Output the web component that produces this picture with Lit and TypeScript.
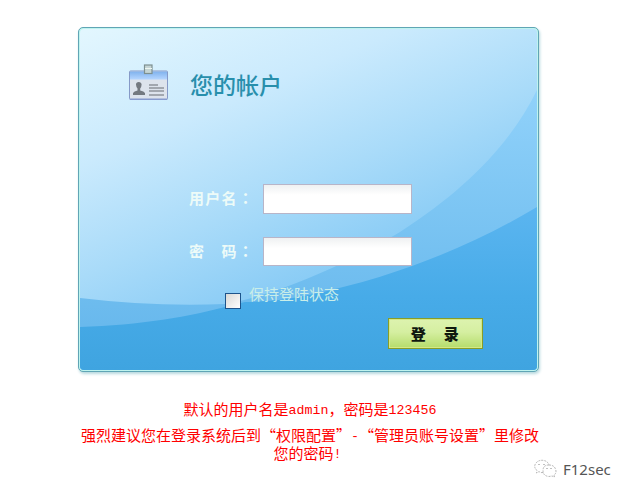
import { LitElement, html, css, svg } from 'lit';
import { customElement, property } from 'lit/decorators.js';

@customElement('card-backdrop')
class CardBackdrop extends LitElement {
  static styles = css`
    :host { position: absolute; inset: 0; overflow: hidden; border-radius: 4px; }
    svg { display: block; width: 100%; height: 100%; }
  `;
  render() {
    return html`<svg viewBox="80 29 457 341" preserveAspectRatio="none">
      ${svg`
      <defs>
        <linearGradient id="sky" gradientUnits="userSpaceOnUse" x1="160" y1="0" x2="285" y2="295">
          <stop offset="0" stop-color="#e2f6fe"/><stop offset=".38" stop-color="#caeafd"/>
          <stop offset=".7" stop-color="#a9dbf9"/><stop offset="1" stop-color="#88cbf5"/>
        </linearGradient>
        <linearGradient id="band" gradientUnits="userSpaceOnUse" x1="0" y1="95" x2="0" y2="325">
          <stop offset="0" stop-color="#90d1fa"/><stop offset=".5" stop-color="#7cc5f3"/><stop offset="1" stop-color="#69b9ed"/>
        </linearGradient>
        <linearGradient id="sea" gradientUnits="userSpaceOnUse" x1="0" y1="208" x2="0" y2="370">
          <stop offset="0" stop-color="#5bb5f0"/><stop offset=".55" stop-color="#47abe8"/><stop offset="1" stop-color="#3fa4e0"/>
        </linearGradient>
      </defs>
      <rect x="80" y="29" width="457" height="341" fill="url(#sky)"/>
      <path d="M80 298Q155 307 225 304C275 295 340 268 400 232C465 190 510 145 537 90V370H80Z" fill="url(#band)"/>
      <path d="M80 327C140 325 190 317 232 305L245 302Q275 302 309 295C400 276 475 244 537 207V370H80Z" fill="url(#sea)"/>`}
    </svg>`;
  }
}

@customElement('badge-icon')
class BadgeIcon extends LitElement {
  static styles = css`:host { display: block; width: 42px; height: 38px; } svg { display: block; }`;
  render() {
    return html`<svg width="42" height="38" viewBox="0 0 42 38">
      <defs>
        <linearGradient id="head" x1="0" y1="0" x2="0" y2="1"><stop stop-color="#80b2ed"/><stop offset="1" stop-color="#b5d6ff"/></linearGradient>
      </defs>
      <rect x="1.5" y="7" width="38" height="28.5" rx="1" fill="#dde3ec" stroke="#8599c7"/>
      <rect x="2" y="7.5" width="37" height="8" fill="url(#head)"/>
      <path d="M2 35.3H39" stroke="#879bce" stroke-width="1.5"/>
      <rect x="16.5" y="1" width="7.5" height="8.5" fill="#c5d5d5" stroke="#7e9090" stroke-width="1.2"/>
      <path d="M17 4.5H24" stroke="#edf6f0"/>
      <path d="M5 31V29Q6 27 9.5 26.5V24.5Q8 22.5 8 20.5Q8 18 10.7 18T13.6 20.5Q13.6 22.5 12.2 24.5V26.5Q16 27 17 29V31Z" fill="#747980"/>
      <path d="M21 21H30M21 24H36M21 27H36M21 31H36" stroke="#8f949a" stroke-width="1.3"/>
    </svg>`;
  }
}

@customElement('login-field')
class LoginField extends LitElement {
  @property() label = '';
  @property() type = 'text';
  static styles = css`
    :host { display: flex; align-items: flex-start; height: 30px; }
    .label { width: 74px; font: 700 15px/28px "Noto Sans CJK SC", sans-serif; color: #edfbf8; white-space: pre; letter-spacing: 1.3px; }
    .colon { font-family: "Noto Sans CJK TC", sans-serif; }
    .box { box-sizing: border-box; width: 149px; height: 100%; padding: 4px; margin: 0; border: 1px solid #b8b5c8; border-radius: 0; background: linear-gradient(#eff1f2, #fff 10px); outline: none; }
  `;
  render() {
    return html`<span class="label">${this.label}<span class="colon" lang="zh-TW">：</span></span><input class="box" type=${this.type} aria-label=${this.label}>`;
  }
}

@customElement('app-root')
class AppRoot extends LitElement {
  static styles = css`
    :host { display: flex; flex-direction: column; box-sizing: border-box; position: relative; width: 630px; height: 495px; padding-top: 27px; overflow: hidden; background: #fff; font-family: "Noto Sans CJK SC", sans-serif; }
    .card { box-sizing: border-box; position: relative; flex: none; width: 461px; height: 345px; margin-left: 78px; border: 1px solid #60a5b5; border-radius: 5px; background: #bef4ef; padding: 1px; box-shadow: 1px 2px 3px #b8d9df; }
    .rim { position: absolute; inset: 1px; }
    .content { position: relative; display: flex; flex-direction: column; padding: 35px 0 0 48px; }
    .head { display: flex; height: 42px; }
    .title { margin: 0 0 0 20px; font-size: 23px; line-height: 40px; font-weight: 500; color: #288fac; }
    .fields { display: flex; flex-direction: column; gap: 23px; margin: 78px 0 0 61px; }
    .short { height: 29px; }
    .keep { display: flex; margin: 19px 0 0 97px; height: 24px; }
    .check { appearance: none; box-sizing: border-box; width: 16px; height: 16px; margin: 8px 8px 0 0; border: 1px solid #1d548b; border-radius: 0; background: linear-gradient(135deg, #d9d9d6, #fff); }
    .keep-text { font-size: 15px; line-height: 18px; color: #c9eee9; }
    .login { box-sizing: border-box; width: 95px; height: 31px; margin: 9px 0 0 260px; padding: 0; border: 1px solid #879d29; border-radius: 0; background: linear-gradient(#ddf3af, #d5efa1 45%, #b5dc6b); box-shadow: inset 0 0 0 1px #d5e884; font: 900 15px/29px "Noto Sans CJK SC", sans-serif; letter-spacing: 1.5px; color: #10180f; white-space: pre; }
    .note { display: flex; flex-direction: column; align-items: center; margin-top: 28px; color: #f00; font-size: 15px; line-height: 18px; width: 620px; }
    .note p { margin: 0; white-space: nowrap; }
    .note .first { margin-bottom: 8px; }
    .note .last { margin-right: 5px; }
    .latin { font: 13.3px/0 "Liberation Mono", monospace; vertical-align: 1px; }
    .mark { position: absolute; left: 534px; top: 458px; display: flex; align-items: center; gap: 6px; height: 22px; }
    .mark-text { font: 15px/20px "Noto Sans", sans-serif; color: #555; }
  `;
  render() {
    return html`
      <main class="card">
        <div class="rim"><card-backdrop></card-backdrop></div>
        <div class="content">
          <div class="head"><badge-icon></badge-icon><h1 class="title">您的帐户</h1></div>
          <div class="fields">
            <login-field label="用户名"></login-field>
            <login-field class="short" label="密　码" type="password"></login-field>
          </div>
          <label class="keep"><input class="check" type="checkbox"><span class="keep-text">保持登陆状态</span></label>
          <button class="login">登　录</button>
        </div>
      </main>
      <section class="note" lang="zh-CN">
        <p class="first">默认的用户名是<span class="latin">admin</span>，密码是<span class="latin">123456</span></p>
        <p>强烈建议您在登录系统后到“权限配置”<span class="latin">-</span>“管理员账号设置”里修改</p>
        <p class="last">您的密码<span class="latin">!</span></p>
      </section>
      <div class="mark">
        <svg width="23" height="20" viewBox="0 0 23 20" fill="none" stroke="#a4a4a4" stroke-width=".8" stroke-dasharray="2 1">
          <path d="M9 13.5Q7 14 5 12.5L2.5 14L3 11.5Q-1 8 2 4Q5 .5 10 1.5Q14 2.5 15 6"/>
          <path d="M15 6Q9 6 9 11.5Q9 17 15 17.5L18 17L20.5 18L20 16Q23 14 21.5 10Q20 6 15 6Z"/>
          <path d="M5 5V6M10 5V6M13 9V10M17 9V10" stroke="#666" stroke-dasharray="none"/>
        </svg><span class="mark-text">F12sec</span>
      </div>`;
  }
}
